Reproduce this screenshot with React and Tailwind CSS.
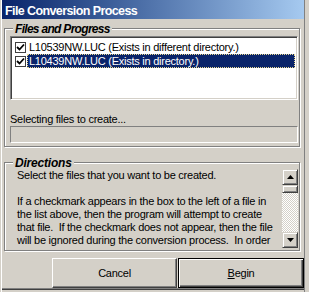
import React from 'react';

const font = "font-['Liberation_Sans',Arial,sans-serif]";

const Check = () => (
  <div className="w-[11px] h-[11px] bg-white border border-[#404040] flex items-center justify-center shrink-0">
    <svg width="9" height="9" viewBox="0 0 9 9">
      <path d="M1 4 L3.5 6.5 L8 1.5" fill="none" stroke="#000" strokeWidth="1.8" />
    </svg>
  </div>
);

const Arrow = ({ down }) => (
  <svg width="7" height="4" viewBox="0 0 7 4">
    {down ? <polygon points="0,0 7,0 3.5,4" fill="#000" /> : <polygon points="3.5,0 7,4 0,4" fill="#000" />}
  </svg>
);

const raised =
  'border border-t-[#d4d0c8] border-l-[#d4d0c8] border-b-[#404040] border-r-[#404040] shadow-[inset_1px_1px_0_#fff,inset_-1px_-1px_0_#808080]';

const GroupBox = ({ label, track, className, children }) => (
  <div className={`relative ml-[2px] w-[296px] border border-[#808080] shadow-[inset_1px_1px_0_#fff,1px_1px_0_#fff] ${className}`}>
    <div className={`absolute top-[-7px] left-[8px] px-[2px] bg-[#d4d0c8] text-[12px] leading-[14px] font-bold italic text-black ${track}`}>
      {label}
    </div>
    {children}
  </div>
);

const lines = [
  'Select the files that you want to be created.',
  '',
  'If a checkmark appears in the box to the left of a file in',
  'the list above, then the program will attempt to create',
  'that file.  If the checkmark does not appear, then the file',
  'will be ignored during the conversion process.  In order',
];

export default function App() {
  return (
    <div
      className={`${font} w-[309px] h-[292px] bg-[#d4d0c8] pl-[2px] pr-[5px] pb-[4px] flex flex-col text-[11px] tracking-[-0.25px] text-black overflow-hidden shadow-[inset_1px_0_0_#d4d0c8,inset_2px_0_0_#fff,inset_-4px_0_0_#d4d0c8,inset_-5px_0_0_#808080,inset_0_-2px_0_#d4d0c8,inset_0_-3px_0_#404040,inset_0_-4px_0_#808080]`}
    >
      <div className="h-[19px] shrink-0 bg-gradient-to-r from-[#0a246a] to-[#a6caf0] pl-[3px] pt-[4px]">
        <span className="text-white font-bold text-[12.5px] leading-[14px] tracking-[-0.6px] block">
          File Conversion Process
        </span>
      </div>

      <GroupBox label="Files and Progress" track="tracking-[-0.7px]" className="mt-[9px] pt-[7px] pb-[3px]">
        <div className="ml-[5px] w-[288px] h-[64px] bg-white border border-t-[#808080] border-l-[#808080] border-b-white border-r-white shadow-[inset_1px_1px_0_#404040,inset_-1px_-1px_0_#d4d0c8] pt-[3px] pl-[4px] pr-[2px]">
          <div className="h-[14px] flex items-center">
            <Check />
            <span className="ml-[1px] pl-[2px] leading-[14px] whitespace-nowrap">
              L10539NW.LUC (Exists in different directory.)
            </span>
          </div>
          <div className="h-[14px] flex items-center">
            <Check />
            <span className="ml-[1px] flex-1 h-[14px] bg-[#0a246a] text-white border border-dotted border-[#e8d890] pl-[1px] leading-[12px] whitespace-nowrap">
              L10439NW.LUC (Exists in directory.)
            </span>
          </div>
        </div>
        <div className="mt-[13px] pl-[5px] leading-[13px] whitespace-nowrap">Selecting files to create...</div>
        <div className="ml-[5px] w-[288px] h-[17px] border border-t-[#808080] border-l-[#808080] border-b-white border-r-white" />
      </GroupBox>

      <GroupBox label="Directions" track="tracking-[-0.2px]" className="mt-[15px] pt-[6px] pb-[2px]">
        <div className="h-[79px] flex">
          <div className="flex-1 pl-[12px] overflow-hidden leading-[13px]">
            {lines.map((l, i) => (
              <div key={i} className="h-[13px] whitespace-pre">
                {l}
              </div>
            ))}
          </div>
          <div className="w-[16px] mr-[1px] flex flex-col">
            <div className={`h-[16px] ${raised} flex items-center justify-center`}>
              <Arrow />
            </div>
            <div className="flex-1 flex flex-col bg-[repeating-conic-gradient(#d4d0c8_0%_25%,#ffffff_0%_50%)] bg-[length:2px_2px]">
              <div className={`h-[8px] ${raised} bg-[#d4d0c8]`} />
            </div>
            <div className={`h-[16px] ${raised} flex items-center justify-center`}>
              <Arrow down />
            </div>
          </div>
        </div>
      </GroupBox>

      <div className="mt-[7px] flex justify-end gap-[1px]">
        <button className="w-[125px] h-[30px] border border-t-white border-l-white border-b-[#404040] border-r-[#404040] shadow-[inset_-1px_-1px_0_#808080] text-[11px]">
          Cancel
        </button>
        <button className="w-[126px] h-[30px] border border-black shadow-[inset_1px_1px_0_#fff,inset_-1px_-1px_0_#404040,inset_-2px_-2px_0_#808080] text-[11px]">
          <span className="underline">B</span>egin
        </button>
      </div>
    </div>
  );
}
